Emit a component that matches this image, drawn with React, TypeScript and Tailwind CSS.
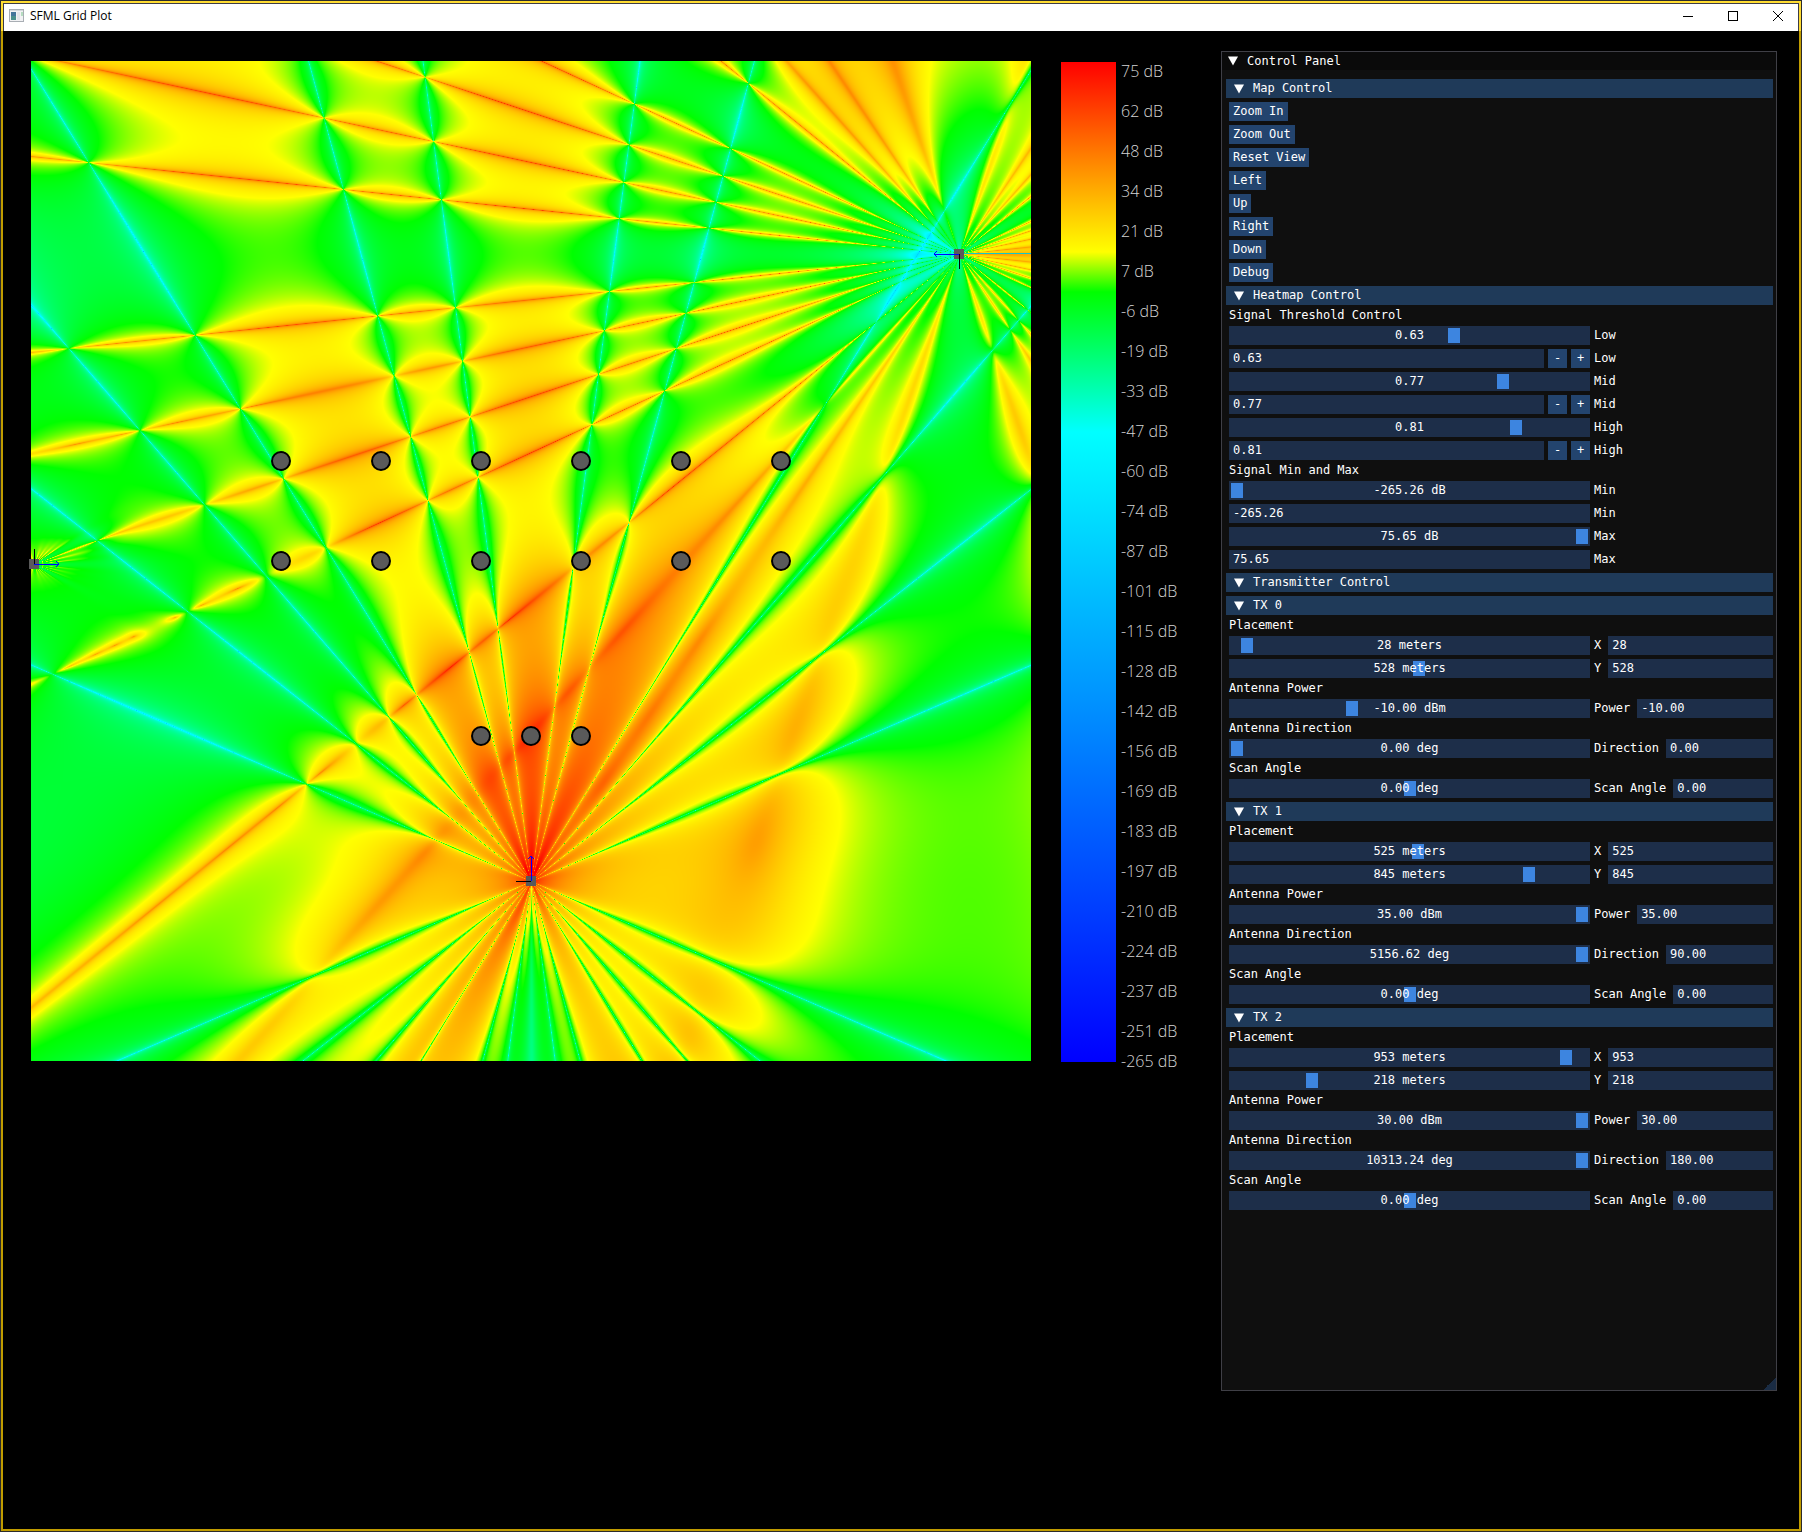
import { useLayoutEffect, useRef, useState } from "react";

const MAP_SIZE = 1000;
const MAP_OFFSET = 25;
const SIGNAL_MIN = -265.26;
const SIGNAL_MAX = 75.65;
const NOISE = 2e-9;

type Transmitter = {
  x: number;
  y: number;
  power: string;
  direction: string;
  directionLabel: string;
  heading: number;
  // spacing of the pattern nulls in sin(angle), and the period of the array factor
  nullStep: number;
  period: number;
  // null orders that are filled in, and the shallow dips that replace them
  filled: number[];
  dips: number[][];
  endfireGain: number;
};

const transmitters: Transmitter[] = [
  {
    x: 28,
    y: 528,
    power: "-10.00",
    direction: "0.00",
    directionLabel: "0.00 deg",
    heading: 0,
    nullStep: 0.118,
    period: 9,
    filled: [4],
    dips: [],
    endfireGain: 0,
  },
  {
    x: 525,
    y: 845,
    power: "35.00",
    direction: "90.00",
    directionLabel: "5156.62 deg",
    heading: 90,
    nullStep: 0.1311,
    period: 8.7,
    filled: [3],
    dips: [],
    endfireGain: 0,
  },
  {
    x: 953,
    y: 218,
    power: "30.00",
    direction: "180.00",
    directionLabel: "10313.24 deg",
    heading: 180,
    nullStep: 0.105,
    period: 24,
    filled: [5, 7, 8, 9],
    dips: [
      [7.1, 0.008],
      [7.9, 0.008],
      [9, 0.012],
    ],
    endfireGain: 5,
  },
];

const receivers = [
  ...[250, 350, 450, 550, 650, 750].map((x) => [x, 400]),
  ...[250, 350, 450, 550, 650, 750].map((x) => [x, 500]),
  ...[450, 500, 550].map((x) => [x, 675]),
];

// stop position along the min..max range, followed by its colour
const colorStops = [
  [0, 0, 0, 255],
  [0.63, 0, 255, 255],
  [0.77, 0, 255, 0],
  [0.81, 255, 255, 0],
  [1, 255, 0, 0],
];

const fieldPower = (tx: Transmitter, px: number, py: number) => {
  const dx = px - (tx.x - MAP_OFFSET);
  const dy = tx.y - MAP_OFFSET - py;
  const dist = Math.max(Math.sqrt(dx * dx + dy * dy), 1);
  const rad = (tx.heading * Math.PI) / 180;
  const cos = (dx * Math.cos(rad) + dy * Math.sin(rad)) / dist;
  const sin = (dy * Math.cos(rad) - dx * Math.sin(rad)) / dist;
  const u = Math.abs(sin) / tx.nullStep + 1e-6;
  let array = Math.sin(Math.PI * u) / (tx.period * Math.sin((Math.PI * u) / tx.period));
  for (const order of tx.filled) array /= 1 - (u / order) ** 2 + 1e-9;
  for (const [order, depth] of tx.dips) array *= Math.hypot(1 - (u / order) ** 2, depth);
  array *= 1 + tx.endfireGain * Math.max(0, (u - 9) * 2) ** 2;
  const element = (1 + cos) / 2 + 1e-4;
  const amplitude = (array * element) / dist;
  return amplitude * amplitude * Math.pow(10, Number(tx.power) / 10);
};

const drawHeatmap = (ctx: CanvasRenderingContext2D) => {
  const image = ctx.createImageData(MAP_SIZE, MAP_SIZE);
  const [tx0, tx1, tx2] = transmitters;
  let i = 0;
  for (let y = 0; y < MAP_SIZE; y++) {
    for (let x = 0; x < MAP_SIZE; x++) {
      const signal = fieldPower(tx1, x, y);
      const interference = fieldPower(tx0, x, y) + fieldPower(tx2, x, y) + NOISE;
      const db = 10 * Math.log10(signal / interference + 1e-26);
      const t = Math.min(Math.max((db - SIGNAL_MIN) / (SIGNAL_MAX - SIGNAL_MIN), 0), 1);
      let s = 1;
      while (s < colorStops.length - 1 && t > colorStops[s][0]) s++;
      const lo = colorStops[s - 1];
      const hi = colorStops[s];
      const f = (t - lo[0]) / (hi[0] - lo[0]);
      image.data[i++] = lo[1] + (hi[1] - lo[1]) * f;
      image.data[i++] = lo[2] + (hi[2] - lo[2]) * f;
      image.data[i++] = lo[3] + (hi[3] - lo[3]) * f;
      image.data[i++] = 255;
    }
  }
  ctx.putImageData(image, 0, 0);
  ctx.fillStyle = "#14c8c8";
  ctx.fillRect(tx2.x - MAP_OFFSET + 5, tx2.y - MAP_OFFSET - 1, MAP_SIZE, 1);
};

const Heatmap = () => {
  const ref = useRef<HTMLCanvasElement>(null);

  useLayoutEffect(() => {
    const ctx = ref.current?.getContext("2d");
    if (ctx) drawHeatmap(ctx);
  }, []);

  return (
    <div className="relative mt-[30px] min-w-0 flex-1">
      <canvas ref={ref} width={MAP_SIZE} height={MAP_SIZE} className="block w-full" />
      <svg viewBox="0 0 1000 1000" className="absolute inset-0 h-full w-full overflow-visible">
        {receivers.map(([x, y]) => (
          <circle key={`${x}-${y}`} cx={x} cy={y} r="9" fill="#5a5a5a" stroke="#000" strokeWidth="2" />
        ))}
        {transmitters.map((tx) => (
          <g
            key={tx.heading}
            transform={`translate(${tx.x - MAP_OFFSET} ${tx.y - MAP_OFFSET}) rotate(${-tx.heading})`}
            shapeRendering="crispEdges"
          >
            <rect x="-5" y="-5" width="10" height="10" fill="#5a5a5a" />
            <path d="M0 0V-15" stroke="#000" strokeWidth="1" />
            <path d="M0 0H25M22 -3L25 0L22 3" fill="none" stroke="#0000ff" strokeWidth="1" />
          </g>
        ))}
      </svg>
    </div>
  );
};

const Legend = () => {
  const step = (SIGNAL_MAX - SIGNAL_MIN) / 25;
  const labels = Array.from({ length: 26 }, (_, k) => Math.trunc(SIGNAL_MAX - step * k + 0.001));

  return (
    <div className="mt-[30px] flex w-[160px] shrink-0 gap-[5px]">
      <div className="mt-px h-[1000px] w-[55px] bg-[linear-gradient(to_bottom,#f00_0%,#ff0_19%,#0f0_23%,#0ff_37%,#00f_100%)]" />
      <ul className="font-['Open_Sans',sans-serif] text-[16px] leading-5 font-light text-[#d4d4d4]">
        {labels.map((label, k) => (
          <li key={label} className={k < 24 ? "h-10" : k === 24 ? "h-[30px]" : "h-5"}>
            {label} dB
          </li>
        ))}
      </ul>
    </div>
  );
};

const Arrow = () => (
  <svg viewBox="0 0 10 10" className="h-[10px] w-[10px] shrink-0" fill="#fff">
    <path d="M0 0.5H10L5 9.5Z" />
  </svg>
);

const Header = ({ children }: { children: string }) => (
  <button className="-ml-[3px] flex h-[19px] items-center gap-[9px] bg-[#1f3a59] pl-[8px] text-left">
    <Arrow />
    {children}
  </button>
);

const buttonClass = "h-[19px] bg-[#23446e] hover:bg-[#4296fa]";
const fieldClass = "h-[19px] min-w-0 bg-[#1d2e49] px-1 outline-none";

type SliderProps = {
  name: string;
  text: string;
  value: number;
  min?: number;
  max?: number;
};

const Slider = ({ name, text, value, min = 0, max = 1 }: SliderProps) => {
  const [current, setCurrent] = useState(value);

  return (
    <div className="relative h-[19px] w-[361px] shrink-0">
      <input
        type="range"
        aria-label={name}
        min={min}
        max={max}
        step="any"
        value={current}
        onChange={(e) => setCurrent(Number(e.target.value))}
        className="block h-[19px] w-full appearance-none bg-[#1d2e49] px-[2px] outline-none [&::-webkit-slider-thumb]:h-[15px] [&::-webkit-slider-thumb]:w-3 [&::-webkit-slider-thumb]:appearance-none [&::-webkit-slider-thumb]:bg-[#3d85e0]"
      />
      <span className="pointer-events-none absolute inset-0 text-center">{text}</span>
    </div>
  );
};

type RowProps = SliderProps & { label: string; input: string };

const SliderWithInput = ({ label, input, ...slider }: RowProps) => (
  <div className="flex gap-1">
    <Slider {...slider} />
    <label className="flex min-w-0 flex-1 gap-[7px] whitespace-nowrap">
      {label}
      <input defaultValue={input} className={`${fieldClass} w-0 flex-1`} />
    </label>
  </div>
);

const LabeledSlider = ({ label, ...slider }: SliderProps & { label: string }) => (
  <div className="flex gap-1">
    <Slider {...slider} />
    <span>{label}</span>
  </div>
);

const Threshold = ({ label, value }: { label: string; value: number }) => (
  <>
    <LabeledSlider label={label} name={`${label} threshold`} text={value.toFixed(2)} value={value} />
    <div className="flex gap-1">
      <input id={`${label}-value`} defaultValue={value.toFixed(2)} className={`${fieldClass} w-[315px]`} />
      <button className={`${buttonClass} w-[19px]`}>-</button>
      <button className={`${buttonClass} w-[19px]`}>+</button>
      <label htmlFor={`${label}-value`}>{label}</label>
    </div>
  </>
);

const Limit = ({ label, value }: { label: string; value: number }) => (
  <>
    <LabeledSlider
      label={label}
      name={`Signal ${label}`}
      text={`${value.toFixed(2)} dB`}
      value={value}
      min={SIGNAL_MIN}
      max={SIGNAL_MAX}
    />
    <div className="flex gap-1">
      <input id={`${label}-value`} defaultValue={value.toFixed(2)} className={`${fieldClass} w-[361px]`} />
      <label htmlFor={`${label}-value`}>{label}</label>
    </div>
  </>
);

const Caption = ({ children }: { children: string }) => <p className="h-[13px] leading-[13px]">{children}</p>;

const TransmitterSection = ({ index, tx }: { index: number; tx: Transmitter }) => (
  <>
    <Header>{`TX ${index}`}</Header>
    <Caption>Placement</Caption>
    <SliderWithInput name={`TX ${index} x`} text={`${tx.x} meters`} value={tx.x} max={1000} label="X" input={`${tx.x}`} />
    <SliderWithInput name={`TX ${index} y`} text={`${tx.y} meters`} value={tx.y} max={1000} label="Y" input={`${tx.y}`} />
    <Caption>Antenna Power</Caption>
    <SliderWithInput
      name={`TX ${index} power`}
      text={`${tx.power} dBm`}
      value={Math.min(Number(tx.power), 30)}
      min={-30}
      max={30}
      label="Power"
      input={tx.power}
    />
    <Caption>Antenna Direction</Caption>
    <SliderWithInput
      name={`TX ${index} direction`}
      text={tx.directionLabel}
      value={Math.min(tx.heading, 6.28)}
      max={6.28}
      label="Direction"
      input={tx.direction}
    />
    <Caption>Scan Angle</Caption>
    <SliderWithInput name={`TX ${index} scan angle`} text="0.00 deg" value={0} min={-90} max={90} label="Scan Angle" input="0.00" />
  </>
);

const mapActions = ["Zoom In", "Zoom Out", "Reset View", "Left", "Up", "Right", "Down", "Debug"];

const ControlPanel = () => (
  <section className="relative mt-5 mb-[138px] w-[556px] shrink-0 self-stretch border border-[#3f3f46] bg-[#0f0f0f] font-['DejaVu_Sans_Mono',monospace] text-[12px] leading-[19px] text-white">
    <div className="flex h-[18px] items-center gap-[9px] bg-[#0a0a0a] pl-[6px]">
      <Arrow />
      <h2>Control Panel</h2>
    </div>
    <div className="flex flex-col gap-1 pt-[9px] pr-[3px] pb-4 pl-[7px]">
      <Header>Map Control</Header>
      {mapActions.map((action) => (
        <button key={action} className={`${buttonClass} self-start px-1`}>
          {action}
        </button>
      ))}
      <Header>Heatmap Control</Header>
      <Caption>Signal Threshold Control</Caption>
      <Threshold label="Low" value={0.63} />
      <Threshold label="Mid" value={0.77} />
      <Threshold label="High" value={0.81} />
      <Caption>Signal Min and Max</Caption>
      <Limit label="Min" value={SIGNAL_MIN} />
      <Limit label="Max" value={SIGNAL_MAX} />
      <Header>Transmitter Control</Header>
      {transmitters.map((tx, index) => (
        <TransmitterSection key={index} index={index} tx={tx} />
      ))}
    </div>
    <div className="absolute right-0 bottom-0 h-[13px] w-[13px] bg-[linear-gradient(135deg,transparent_50%,#1a2c44_50%)]" />
  </section>
);

const TitleBar = () => (
  <header className="border-x-2 border-t-2 border-[#ffdc32] bg-[#3c3c46]">
    <div className="mx-px mt-px flex h-[27px] items-center bg-white pb-1 pl-[5px]">
      <svg viewBox="0 0 15 13" className="h-[13px] w-[15px]">
        <rect x="0.5" y="0.5" width="14" height="12" fill="#f2f2f4" stroke="#a9aeb4" />
        <path d="M1 1.5H14" stroke="#d4d8dc" />
        <rect x="2" y="3" width="5" height="4" fill="#44759a" />
        <rect x="2" y="7" width="5" height="4" fill="#4a8f8c" />
        <rect x="8" y="3" width="3" height="8" fill="#e3e4e8" />
        <rect x="12" y="3" width="2" height="4" fill="#b5dcc0" />
      </svg>
      <h1 className="ml-[6px] flex-1 font-['Open_Sans',sans-serif] text-[12px] leading-4 text-black">SFML Grid Plot</h1>
      <div className="flex gap-[5px]">
        <button aria-label="Minimize" className="flex h-[23px] w-10 items-center justify-center">
          <svg viewBox="0 0 10 10" className="h-[10px] w-[10px]" stroke="#000" shapeRendering="crispEdges">
            <path d="M0 5.5H10" />
          </svg>
        </button>
        <button aria-label="Maximize" className="flex h-[23px] w-10 items-center justify-center">
          <svg viewBox="0 0 10 10" className="h-[10px] w-[10px]" stroke="#000" fill="none" shapeRendering="crispEdges">
            <path d="M0.5 0.5H9.5V9.5H0.5Z" />
          </svg>
        </button>
        <button aria-label="Close" className="flex h-[23px] w-10 items-center justify-center">
          <svg viewBox="0 0 10 10" className="h-[10px] w-[10px]" stroke="#000">
            <path d="M0 0L10 10M10 0L0 10" />
          </svg>
        </button>
      </div>
    </div>
  </header>
);

const App = () => {
  return (
    <div className="flex min-h-screen flex-col bg-[#2b2b2b] p-px">
      <TitleBar />
      <main className="flex flex-1 items-start border-x-2 border-b-2 border-[#c09c00] bg-black pr-[22px] pl-7">
        <Heatmap />
        <div className="w-[30px] shrink-0" />
        <Legend />
        <ControlPanel />
      </main>
    </div>
  );
};

export default App;
